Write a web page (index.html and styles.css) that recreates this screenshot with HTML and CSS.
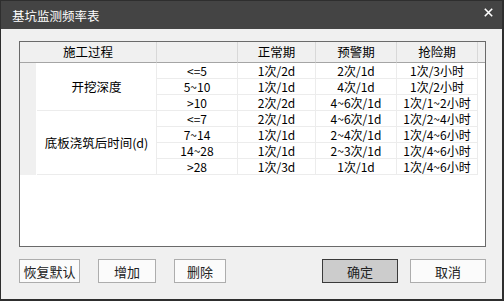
FILE: index.html
```html
<!DOCTYPE html>
<html>
<head>
<meta charset="utf-8">
<link rel="stylesheet" href="styles.css">
</head>
<body>
<div class="window">
  <div class="titlebar">
    <span class="title">基坑监测频率表</span>
    <svg class="close" width="9" height="9" viewBox="0 0 9 9"><path d="M0.8 0.8L8.2 8.2M8.2 0.8L0.8 8.2" stroke="#fff" stroke-width="1.6"/></svg>
  </div>
  <div class="content">
    <div class="gridbox">
      <div class="grid">
        <div class="h h-main">施工过程</div>
        <div class="h"></div>
        <div class="h">正常期</div>
        <div class="h">预警期</div>
        <div class="h">抢险期</div>
        <div class="h h-fill"></div>

        <div class="strip"></div>
        <div class="label l1">开挖深度</div>
        <div class="label l2">底板浇筑后时间(d)</div>

        <div class="c s">&lt;=5</div><div class="c">1次/2d</div><div class="c">2次/1d</div><div class="c">1次/3小时</div>
        <div class="c s">5~10</div><div class="c">1次/1d</div><div class="c">4次/1d</div><div class="c">1次/2小时</div>
        <div class="c s">&gt;10</div><div class="c">2次/2d</div><div class="c">4~6次/1d</div><div class="c">1次/1~2小时</div>
        <div class="c s">&lt;=7</div><div class="c">2次/1d</div><div class="c">4~6次/1d</div><div class="c">1次/2~4小时</div>
        <div class="c s">7~14</div><div class="c">1次/1d</div><div class="c">2~4次/1d</div><div class="c">1次/4~6小时</div>
        <div class="c s">14~28</div><div class="c">1次/1d</div><div class="c">2~3次/1d</div><div class="c">1次/4~6小时</div>
        <div class="c s">&gt;28</div><div class="c">1次/3d</div><div class="c">1次/1d</div><div class="c">1次/4~6小时</div>
      </div>
    </div>
    <div class="buttons">
      <button class="btn w61">恢复默认</button>
      <button class="btn w58">增加</button>
      <button class="btn w52">删除</button>
      <button class="btn w76 primary">确定</button>
      <button class="btn w76">取消</button>
    </div>
  </div>
</div>
</body>
</html>
```
FILE: styles.css
```css
* { box-sizing: border-box; }
html, body { margin: 0; padding: 0; }
body {
  font-family: "Noto Sans CJK SC", "Noto Sans", sans-serif;
  font-size: 12px;
  color: #000;
  background: #f0f0f0;
}
.window {
  width: 504px;
  height: 301px;
  border: 1px solid #2e2e2e;
  border-right-width: 2px;
  border-bottom-width: 2px;
  background: #f0f0f0;
  display: flex;
  flex-direction: column;
}
.titlebar {
  height: 28px;
  background: #444444;
  display: flex;
  align-items: flex-start;
  padding: 5px 9px 0 11px;
}
.title {
  color: #fff;
  font-size: 12.5px;
  line-height: 20px;
  flex: 1;
}
.close {
  margin-top: 2px;
}
.content {
  padding: 12px 16px 0 18px;
}
.gridbox {
  width: 467px;
  height: 206px;
  border: 1px solid #6a6a6a;
  background: #fff;
}
.grid {
  display: grid;
  grid-template-columns: 17px 120px 81px 78px 81px 81px 7px;
  grid-template-rows: 21px repeat(7, 16px);
}
.h {
  background: #f0f0f0;
  border-right: 1px solid #d8d8d8;
  border-bottom: 1px solid #a5a5a5;
  display: flex;
  align-items: center;
  justify-content: center;
  font-size: 12.5px;
  line-height: 20px;
}
.h-main { grid-column: 1 / span 2; }
.h-fill { border-right: none; }
.strip {
  grid-column: 1;
  grid-row: 2 / span 7;
  background: #f0f0f0;
  margin-right: 1px;
}
.label {
  grid-column: 2;
  display: flex;
  align-items: center;
  justify-content: center;
  border-right: 1px solid #ececec;
  border-bottom: 1px solid #ececec;
  font-size: 12.5px;
}
.l1 { grid-row: 2 / span 3; }
.l2 { grid-row: 5 / span 4; }
.c {
  display: flex;
  align-items: center;
  justify-content: center;
  border-right: 1px solid #ececec;
  border-bottom: 1px solid #ececec;
  line-height: 15px;
  white-space: nowrap;
}
.s { grid-column: 3; }
.buttons {
  display: flex;
  margin-top: 12px;
  gap: 18px;
}
.btn {
  height: 24px;
  border: 1px solid #adadad;
  background: #fbfbfb;
  font-family: "Noto Sans CJK SC", "Noto Sans", sans-serif;
  font-size: 13px;
  color: #222;
  padding: 0;
  margin: 0;
}
.w61 { width: 61px; }
.w58 { width: 58px; }
.w52 { width: 52px; }
.w76 { width: 76px; }
.primary {
  margin-left: auto;
  margin-right: -6px;
  background: #cccccc;
  border-color: #3a3a3a;
}
```
